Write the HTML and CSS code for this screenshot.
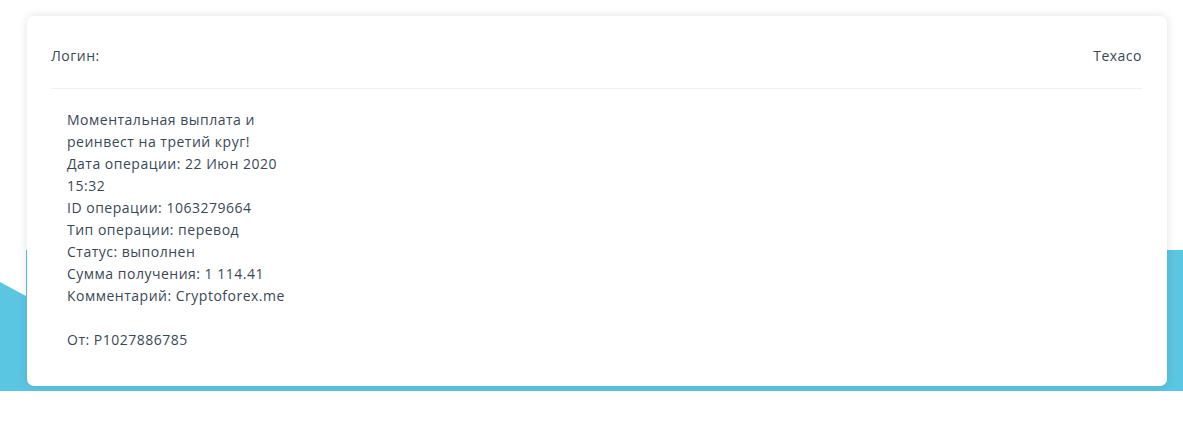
FILE: index.html
```html
<!DOCTYPE html>
<html>
<head>
<title>Операция</title>
<meta charset='utf-8'/>
<link rel="stylesheet" href="styles.css">
</head>
<body>
<div class="stage">
	<!-- голубая волна за карточкой -->
	<svg class="wave" width="1183" height="442" viewBox="0 0 1183 442">
		<path d="M0 282 L26 296 L26 250 L1183 250 L1183 391 L0 391 Z" fill="#5bc6e2"/>
	</svg>
	<div class="card">
		<div class="card-head">
			<span>Логин:</span>
			<span>Texaco</span>
		</div>
		<div class="card-body">
			Моментальная выплата и<br/>
			реинвест на третий круг!<br/>
			Дата операции: 22 Июн 2020<br/>
			15:32<br/>
			ID операции: 1063279664<br/>
			Тип операции: перевод<br/>
			Статус: выполнен<br/>
			Сумма получения: 1 114.41<br/>
			Комментарий: Cryptoforex.me<br/>
			<br/>
			От: P1027886785
		</div>
	</div>
</div>
</body>
</html>
```

FILE: styles.css
```css
body {
	margin: 0;
	background: #fff;
	font-family: "Open Sans", "Noto Sans", sans-serif;
	font-size: 14px;
	letter-spacing: 0.5px;
	color: #3a4856;
}
.stage {
	position: relative;
	height: 442px;
	padding: 16px 0 0 27px;
	box-sizing: border-box;
}
.wave {
	position: absolute;
	left: 0;
	top: 0;
}
.card {
	position: relative;
	width: 1140px;
	height: 370px;
	box-sizing: border-box;
	background: #fff;
	border-radius: 7px;
	box-shadow: 0 0 10px rgba(0, 0, 0, 0.12);
	padding: 0 25px 0 24px;
}
.card-head {
	display: flex;
	justify-content: space-between;
	align-items: center;
	height: 66px;
	border-bottom: 1px solid #eef0f2;
	padding-top: 6px;
}
.card-body {
	padding: 20px 16px 0 16px;
	line-height: 22px;
}
```
